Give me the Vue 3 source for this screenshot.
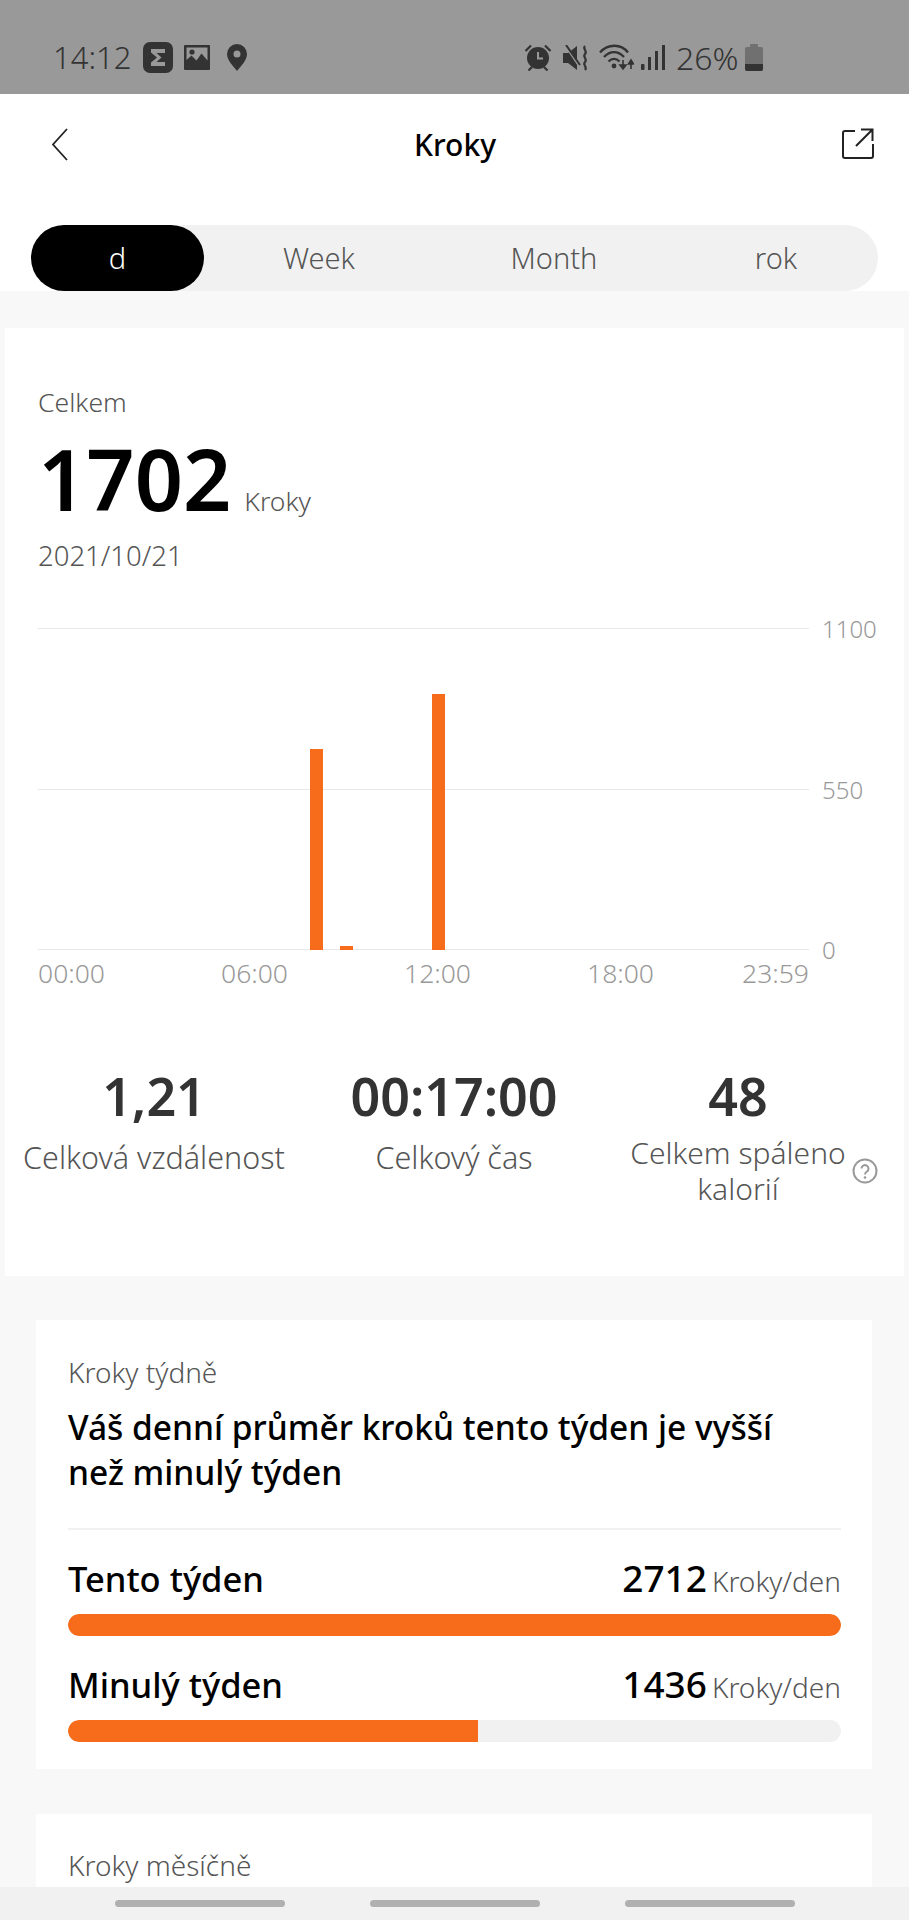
<template>
  <div class="screen">
    <!-- status bar -->
    <div class="status-bar">
      <div class="status-left">
        <span class="clock">14:12</span>
        <svg class="ic-sigma" width="30" height="31" viewBox="0 0 30 31">
          <rect width="30" height="31" rx="7" fill="#333" />
          <path d="M8 7h14v4h-8.500l5 4.500-5 4.500H22v4H8v-3.500l6-5-6-5z" fill="#999" />
        </svg>
        <svg class="ic-photo" width="26" height="25" viewBox="0 0 26 25">
          <path fill="#333" fill-rule="evenodd" d="M1 0h24a1 1 0 0 1 1 1v23a1 1 0 0 1-1 1H1a1 1 0 0 1-1-1V1a1 1 0 0 1 1-1zM2.500 2.500V15l5-4.500 5 5 5-7 6 7V2.500z" />
          <circle cx="8" cy="7" r="2.600" fill="#333" />
        </svg>
        <svg class="ic-pin" width="20" height="27" viewBox="0 0 20 27">
          <path fill="#333" fill-rule="evenodd" d="M10 0a10 10 0 0 1 10 10c0 6-6 12-10 17C6 22 0 16 0 10A10 10 0 0 1 10 0zm0 6.500a3.500 3.500 0 1 0 0 7 3.500 3.500 0 0 0 0-7z" />
        </svg>
      </div>
      <div class="status-right">
        <svg width="28" height="27" viewBox="0 0 28 27">
          <circle cx="14" cy="14" r="11" fill="#333" />
          <path d="M14 8v6.500h5" fill="none" stroke="#999" stroke-width="2" />
          <path d="M1.500 7 7 1.500M26.500 7 21 1.500M4.500 26.500l3.500-3.500M23.500 26.500 20 23" stroke="#333" stroke-width="2.200" fill="none" />
        </svg>
        <svg class="ic-mute" width="27" height="26" viewBox="0 0 27 26">
          <path d="M0 8h5l9-7v24l-9-7H0z" fill="#333" />
          <path d="M3 1 17 22" stroke="#999" stroke-width="2.500" />
          <path d="M3 0 17 20" stroke="#333" stroke-width="2" />
          <path d="M22 1c-3 3 3 5 0 8s3 5 0 8 3 5 0 8" fill="none" stroke="#333" stroke-width="2.200" />
        </svg>
        <svg class="ic-wifi" width="35" height="27" viewBox="0 0 35 27">
          <path d="M1 8.500C9-.5 22-.5 29 8.500M5 13C11 6.500 19 6.500 25 13M9.500 17.500c3.500-3.500 7.500-3.500 11 0" fill="none" stroke="#333" stroke-width="2.300" />
          <circle cx="15" cy="22" r="2.400" fill="#333" />
          <path d="M24 16v7M21 21l3 4 3-4z" stroke="#333" stroke-width="1.600" fill="#333" />
          <path d="M32 25v-7M29.500 20l2.500-4 2.500 4z" stroke="#333" stroke-width="1.600" fill="#333" />
        </svg>
        <svg class="ic-signal" width="24" height="25" viewBox="0 0 24 25">
          <rect x="0" y="19" width="3.500" height="6" rx="1" fill="#333" />
          <rect x="7" y="12" width="3" height="13" fill="#333" />
          <rect x="14" y="6" width="3" height="19" fill="#333" />
          <rect x="21" y="0" width="3" height="25" fill="#333" />
        </svg>
        <span class="battery-text">26%</span>
        <svg class="ic-battery" width="18" height="27" viewBox="0 0 18 27">
          <rect x="5" y="0" width="8" height="4" rx="1" fill="#707070" />
          <rect x="0" y="3" width="18" height="24" rx="2" fill="#707070" />
          <path d="M0 20h18v5a2 2 0 0 1-2 2H2a2 2 0 0 1-2-2z" fill="#333" />
        </svg>
      </div>
    </div>

    <!-- title -->
    <header class="top-bar">
      <svg width="17" height="33" viewBox="0 0 17 33">
        <path d="M16 1 2 16.500 16 32" fill="none" stroke="#222" stroke-width="1.800" />
      </svg>
      <h1 class="title">Kroky</h1>
      <svg width="32" height="31" viewBox="0 0 32 31">
        <path d="M13 3H3a2 2 0 0 0-2 2v23a2 2 0 0 0 2 2h26a2 2 0 0 0 2-2V16" fill="none" stroke="#222" stroke-width="2" />
        <path d="M14 18 30 2M19 1.500h11.500V13" fill="none" stroke="#222" stroke-width="2" />
      </svg>
    </header>

    <div class="tabs-wrap">
      <div class="tabs">
        <button v-for="tab in tabs" :key="tab.label" class="tab" :class="{ active: tab.active }" :style="{ width: tab.width + 'px' }">{{ tab.label }}</button>
      </div>
    </div>

    <main class="content">
      <section class="summary">
        <div class="caption">Celkem</div>
        <div class="total">
          <span class="total-num">1702</span>
          <span class="total-unit">Kroky</span>
        </div>
        <div class="caption date">2021/10/21</div>

        <div class="chart">
          <div class="plot">
            <div class="grid-line" style="top: 0"></div>
            <div class="grid-line" style="top: 161px"></div>
            <div class="grid-line" style="top: 321px"></div>
            <div v-for="bar in bars" :key="bar.left" class="bar" :style="{ left: bar.left + 'px', height: bar.height + 'px' }"></div>
          </div>
          <div class="y-labels">
            <span>1100</span>
            <span>550</span>
            <span>0</span>
          </div>
        </div>
        <div class="x-labels">
          <div class="x-even">
            <span>00:00</span>
            <span>06:00</span>
            <span>12:00</span>
            <span>18:00</span>
          </div>
          <span>23:59</span>
        </div>

        <div class="stats">
          <div class="stat">
            <div class="stat-num">1,21</div>
            <div class="stat-label">Celková vzdálenost</div>
          </div>
          <div class="stat">
            <div class="stat-num">00:17:00</div>
            <div class="stat-label">Celkový čas</div>
          </div>
          <div class="stat with-help">
            <div class="stat-num">48</div>
            <div class="stat-label tight">Celkem spáleno<br />kalorií</div>
            <svg class="help" width="26" height="26" viewBox="0 0 26 26">
              <circle cx="13" cy="13" r="11.500" fill="none" stroke="#999" stroke-width="2" />
              <path d="M9.500 10.500a3.500 3.500 0 1 1 5.500 3c-1.300.9-2 1.500-2 3" fill="none" stroke="#999" stroke-width="2" />
              <circle cx="13" cy="19.500" r="1.300" fill="#999" />
            </svg>
          </div>
        </div>
      </section>

      <section class="card week">
        <div class="caption large">Kroky týdně</div>
        <p class="headline">Váš denní průměr kroků tento týden je vyšší než minulý týden</p>
        <div class="divider"></div>
        <div v-for="row in rows" :key="row.name" class="compare">
          <div class="compare-head">
            <span class="compare-name">{{ row.name }}</span>
            <span class="compare-val">{{ row.value }}<small>Kroky/den</small></span>
          </div>
          <div class="track">
            <div class="fill" :class="{ full: row.pct === 100 }" :style="{ width: row.pct + '%' }"></div>
          </div>
        </div>
      </section>

      <section class="card month">
        <div class="caption large">Kroky měsíčně</div>
      </section>
    </main>

    <nav class="bottom-nav">
      <span></span>
      <span></span>
      <span></span>
    </nav>
  </div>
</template>

<script setup>
const tabs = [
  { label: 'd', width: 173, active: true },
  { label: 'Week', width: 230 },
  { label: 'Month', width: 240 },
  { label: 'rok', width: 204 }
]

const bars = [
  { left: 272, height: 201 },
  { left: 302, height: 4 },
  { left: 394, height: 256 }
]

const rows = [
  { name: 'Tento týden', value: 2712, pct: 100 },
  { name: 'Minulý týden', value: 1436, pct: 53 }
]
</script>

<style>
html,
body {
  margin: 0;
  background: #f8f8f8;
}
</style>

<style scoped>
.screen {
  position: relative;
  width: 909px;
  height: 1920px;
  overflow: hidden;
  background: #f8f8f8;
  font-family: "Noto Sans", "Liberation Sans", sans-serif;
  color: #000;
}

.status-bar {
  height: 94px;
  box-sizing: border-box;
  padding: 42px 146px 0 53px;
  display: flex;
  justify-content: space-between;
  align-items: flex-start;
  background: #999;
  color: #333;
}

.status-left,
.status-right {
  display: flex;
  align-items: center;
  height: 31px;
}

.clock {
  font-size: 31px;
  font-weight: 300;
  line-height: 31px;
  width: 90px;
}

.ic-photo {
  margin-left: 11px;
}

.ic-pin {
  margin-left: 17px;
}

.ic-mute {
  margin-left: 11px;
}

.ic-wifi {
  margin-left: 9px;
}

.ic-signal {
  margin-left: 7px;
}

.battery-text {
  margin-left: 11px;
  width: 69px;
  font-size: 32px;
  font-weight: 300;
  line-height: 31px;
}

.top-bar {
  height: 131px;
  box-sizing: border-box;
  padding: 34px 35px 0 51px;
  display: flex;
  justify-content: space-between;
  align-items: flex-start;
  background: #fff;
}

.title {
  margin: 0;
  font-size: 30px;
  font-weight: 500;
  line-height: 34px;
}

.tabs-wrap {
  background: #fff;
  padding: 0 31px;
}

.tabs {
  width: 847px;
  height: 66px;
  display: flex;
  border-radius: 33px;
  background: #f1f1f1;
}

.tab {
  border: 0;
  padding: 0 0 2px;
  background: none;
  border-radius: 33px;
  font: inherit;
  font-size: 29px;
  font-weight: 300;
  color: #555;
}

.tab.active {
  background: #000;
  color: #fff;
}

.content {
  padding-top: 37px;
}

.caption {
  font-size: 26.500px;
  font-weight: 300;
  line-height: 32px;
  color: #555;
}

.caption.large {
  font-size: 28px;
}

.summary {
  margin: 0 5px;
  height: 948px;
  box-sizing: border-box;
  padding: 58px 0 0 33px;
  background: #fff;
}

.total {
  display: flex;
  align-items: baseline;
  margin-top: 17px;
  height: 88px;
}

.total-num {
  font-size: 84.500px;
  font-weight: 600;
  line-height: 88px;
}

.total-unit {
  margin-left: 13px;
  font-size: 26.500px;
  font-weight: 300;
  color: #555;
}

.date {
  margin-top: 17px;
  font-size: 27.500px;
}

.chart {
  display: flex;
  margin-top: 56px;
}

.plot {
  position: relative;
  width: 771px;
  height: 322px;
}

.grid-line {
  position: absolute;
  left: 0;
  right: 0;
  height: 1px;
  background: #e8e8e8;
}

.bar {
  position: absolute;
  bottom: 0;
  width: 13px;
  background: #f66c1a;
}

.y-labels {
  margin: -14px 0 -15px 13px;
  display: flex;
  flex-direction: column;
  justify-content: space-between;
  font-size: 24px;
  font-weight: 300;
  line-height: 30px;
  color: #999;
}

.x-labels {
  width: 771px;
  margin-top: 7px;
  display: flex;
  justify-content: space-between;
  font-size: 26.500px;
  font-weight: 300;
  line-height: 32px;
  color: #999;
}

.x-even {
  display: flex;
  gap: 116px;
}

.stats {
  margin: 76px 0 0 -33px;
  display: grid;
  grid-template-columns: 298px 302px 266px;
}

.stat {
  position: relative;
  text-align: center;
}

.stat-num {
  font-size: 52px;
  font-weight: 600;
  line-height: 62px;
  color: #333;
}

.stat-label {
  margin-top: 12px;
  font-size: 30.500px;
  font-weight: 300;
  line-height: 36px;
  color: #555;
  white-space: nowrap;
}

.stat-label.tight {
  margin-top: 8px;
  font-size: 30px;
}

.help {
  position: absolute;
  top: 93px;
  right: -7px;
}

.card {
  margin: 44px 37px 0 36px;
  background: #fff;
  padding: 0 31px 0 32px;
}

.week {
  height: 449px;
  box-sizing: border-box;
  padding-top: 36px;
}

.headline {
  margin: 17px 0 0;
  max-width: 745px;
  font-size: 33.500px;
  font-weight: 500;
  line-height: 45px;
}

.divider {
  height: 2px;
  margin-top: 33px;
  background: #f1f1f1;
}

.compare {
  margin-top: 26px;
}

.compare-head {
  display: flex;
  justify-content: space-between;
  align-items: baseline;
  height: 44px;
  line-height: 44px;
}

.compare-name {
  font-size: 34.500px;
  font-weight: 500;
}

.compare-val {
  font-size: 37px;
  font-weight: 500;
}

.compare-val small {
  margin-left: 5px;
  font-size: 28px;
  font-weight: 300;
  color: #555;
}

.track {
  height: 22px;
  margin-top: 14px;
  border-radius: 11px;
  background: #f1f1f1;
  overflow: hidden;
}

.fill {
  height: 100%;
  border-radius: 11px 0 0 11px;
  background: #f66c1a;
}

.fill.full {
  border-radius: 11px;
}

.month {
  height: 200px;
  box-sizing: border-box;
  padding-top: 35px;
  margin-top: 45px;
}

.bottom-nav {
  position: absolute;
  left: 0;
  right: 0;
  bottom: 0;
  height: 33px;
  box-sizing: border-box;
  padding-top: 13px;
  display: flex;
  justify-content: center;
  gap: 85px;
  background: #f1f1f1;
}

.bottom-nav span {
  width: 170px;
  height: 7px;
  border-radius: 4px;
  background: #b0b0b0;
}
</style>
